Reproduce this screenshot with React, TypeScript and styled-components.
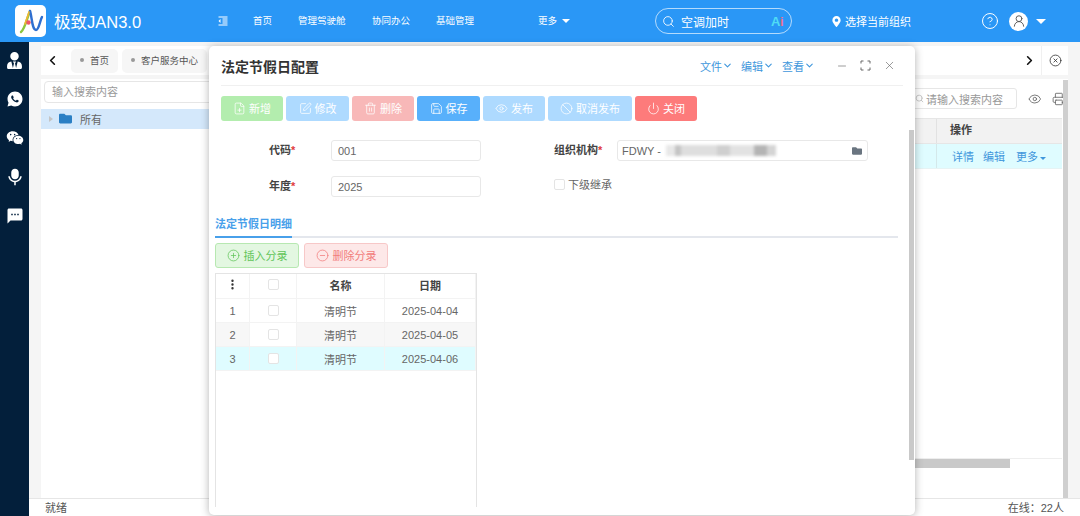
import React from "react";
import styled, { createGlobalStyle } from "styled-components";
import {
  Ban,
  ChevronDown,
  ChevronLeft,
  ChevronRight,
  CircleHelp,
  CircleMinus,
  CirclePlus,
  CircleX,
  Eye,
  EllipsisVertical,
  FilePlus,
  Minus,
  Power,
  Printer,
  Save,
  Search,
  SquarePen,
  Trash2,
  UserRound,
  X,
} from "lucide-react";
import { FaFolder, FaMapMarkerAlt, FaUserTie } from "react-icons/fa";
import { MdFormatIndentDecrease, MdSms } from "react-icons/md";
import { RiMicFill, RiWechatFill, RiWhatsappFill } from "react-icons/ri";

const FONT = `"Liberation Sans", "Noto Sans CJK SC", sans-serif`;

const GlobalStyle = createGlobalStyle`
  html, body {
    margin: 0;
    padding: 0;
    overflow: hidden;
    font-family: ${FONT};
    font-size: 11px;
    color: #555;
  }
  * {
    box-sizing: border-box;
  }
`;

const Page = styled.div`
  position: relative;
  width: 1080px;
  height: 516px;
  display: flex;
  flex-direction: column;
  background: #f5f5f5;
  overflow: hidden;
`;

/* top bar */
const Header = styled.header`
  height: 42px;
  flex: none;
  display: flex;
  align-items: center;
  background: #2a97f6;
  color: #fff;
  padding-left: 15px;
`;

const LogoBox = styled.div`
  width: 31px;
  height: 32px;
  border-radius: 5px;
  background: #fff;
  display: flex;
  align-items: center;
  justify-content: center;
  margin-right: 8px;
`;

const AppName = styled.div`
  font-size: 16.5px;
  width: 163px;
  white-space: nowrap;
`;

const NavIcon = styled.div`
  width: 36px;
  display: flex;
  margin-top: -1px;
`;

const NavItem = styled.div<{ $w: number }>`
  width: ${({ $w }) => $w}px;
  font-size: 9.5px;
  white-space: nowrap;
  margin-top: -2px;
`;

const Caret = styled.span<{ $size: number; $color: string; $gap: number }>`
  display: inline-block;
  margin-left: ${({ $gap }) => $gap}px;
  vertical-align: middle;
  border-left: ${({ $size }) => $size}px solid transparent;
  border-right: ${({ $size }) => $size}px solid transparent;
  border-top: ${({ $size }) => $size}px solid ${({ $color }) => $color};
`;

const SearchPill = styled.div`
  width: 137px;
  height: 26px;
  margin-left: 66px;
  border: 1px solid rgba(255, 255, 255, 0.65);
  border-radius: 13px;
  display: flex;
  align-items: center;
  padding: 0 8px 0 6px;
  gap: 6px;
  font-size: 12px;
`;

const AiMark = styled.span`
  margin-left: auto;
  font-weight: 700;
  font-size: 13px;
  color: #4fdcf5;
  letter-spacing: -0.5px;
  i {
    color: #e8708a;
    font-style: normal;
  }
`;

const OrgPicker = styled.div`
  margin-left: 39px;
  width: 150px;
  display: flex;
  align-items: center;
  gap: 3px;
  font-size: 11px;
`;

const Avatar = styled.div`
  width: 19px;
  height: 19px;
  margin-left: 10px;
  border-radius: 50%;
  background: #fff;
  display: flex;
  align-items: center;
  justify-content: center;
`;

const UserCaret = styled.div`
  margin-left: 3px;
  display: flex;
`;

/* body */
const Body = styled.div`
  flex: 1;
  min-height: 0;
  display: flex;
`;

const SideRail = styled.nav`
  width: 29px;
  flex: none;
  background: #031f3b;
  color: #fff;
  display: flex;
  flex-direction: column;
  align-items: center;
  padding-top: 8px;
  gap: 19px;
`;

const RailIcon = styled.div`
  height: 20px;
  display: flex;
  align-items: center;
`;

const Workspace = styled.div`
  flex: 1;
  min-width: 0;
  display: flex;
  flex-direction: column;
`;

const Content = styled.div`
  flex: 1;
  min-height: 0;
  display: flex;
  flex-direction: column;
  padding: 4px 12px 0;
`;

const TabStrip = styled.div`
  width: 1027px;
  height: 29px;
  flex: none;
  display: flex;
  align-items: center;
  background: #fff;
`;

const TabArrow = styled.div<{ $w: number; $after?: number }>`
  width: ${({ $w }) => $w}px;
  margin-right: ${({ $after }) => $after || 0}px;
  display: flex;
  justify-content: center;
  color: #111;
`;

const PageTab = styled.div`
  height: 24px;
  padding: 0 9px;
  margin-right: 4px;
  background: #f6f6f6;
  border-radius: 5px;
  display: flex;
  align-items: center;
  gap: 6px;
  padding-bottom: 1px;
  font-size: 9.5px;
  color: #555;
  white-space: nowrap;
  &::before {
    content: "";
    width: 4px;
    height: 4px;
    border-radius: 50%;
    background: #999;
  }
`;

const StripFill = styled.div`
  flex: 1;
`;

const StripClose = styled.div`
  width: 27px;
  height: 100%;
  border-left: 1px solid #f0f0f0;
  display: flex;
  align-items: center;
  justify-content: center;
  color: #333;
`;

const Panel = styled.div`
  position: relative;
  margin-top: 4px;
  width: 1027px;
  flex: 1;
  min-height: 0;
  background: #fff;
  display: flex;
`;

const TreeCol = styled.div`
  width: 867px;
  flex: none;
  padding-top: 2px;
`;

const TreeSearch = styled.div`
  height: 22px;
  margin-left: 3px;
  border: 1px solid #e6e6e6;
  border-radius: 4px;
  padding-left: 7px;
  line-height: 20px;
  font-size: 11px;
  color: #9a9a9a;
`;

const TreeRow = styled.div`
  height: 20px;
  margin-top: 6px;
  background: #d4e8fb;
  display: flex;
  align-items: center;
  padding: 0 0 1px 8px;
  font-size: 11px;
  color: #666;
`;

const TreeArrow = styled.span`
  border-top: 3px solid transparent;
  border-bottom: 3px solid transparent;
  border-left: 4px solid #c4c4c4;
  margin-right: 6px;
`;

const TreeLabel = styled.span`
  margin-left: 8px;
`;

const GridCol = styled.div`
  flex: 1;
  min-width: 0;
  display: flex;
  flex-direction: column;
`;

const GridTools = styled.div`
  height: 39px;
  flex: none;
  display: flex;
  align-items: center;
  justify-content: flex-end;
  color: #666;
  gap: 11px;
  padding-right: 2px;
`;

const GridSearch = styled.div`
  width: 111px;
  height: 21px;
  border: 1px solid #e6e6e6;
  border-radius: 3px;
  padding-left: 6px;
  display: flex;
  align-items: center;
  gap: 2px;
  font-size: 11px;
  color: #999;
  white-space: nowrap;
`;

const GridHead = styled.div`
  height: 26px;
  flex: none;
  width: 154px;
  background: #f2f2f2;
  border-top: 1px solid #e6e6e6;
  border-bottom: 1px solid #e6e6e6;
  display: flex;
`;

const OpHeadCell = styled.div`
  margin-left: 28px;
  padding-left: 13px;
  flex: 1;
  border-left: 1px solid #e2e2e2;
  line-height: 22px;
  font-weight: 700;
  color: #444;
`;

const GridRow = styled.div`
  height: 25px;
  flex: none;
  width: 154px;
  background: #dffcff;
  display: flex;
  border-bottom: 1px solid #e6f3f4;
`;

const OpCell = styled.div`
  margin-left: 28px;
  padding-left: 15px;
  flex: 1;
  border-left: 1px solid #d4e8ea;
  display: flex;
  align-items: center;
  gap: 9px;
  color: #3f97dc;
  white-space: nowrap;
`;

const OpMore = styled.span`
  margin-left: 2px;
`;

const GridBody = styled.div`
  flex: none;
  height: 290px;
  width: 154px;
  border-bottom: 1px solid #eee;
`;

const HScroll = styled.div`
  flex: none;
  width: 95px;
  height: 9px;
  margin-left: 7px;
  background: #c9c9c9;
`;

const VScroll = styled.div`
  position: absolute;
  right: 0;
  top: 1px;
  bottom: 0;
  width: 5px;
  background: #cfcfcf;
`;

const StatusBar = styled.footer`
  height: 18px;
  flex: none;
  background: #fff;
  border-top: 1px solid #e6e6e6;
  display: flex;
  align-items: center;
  justify-content: space-between;
  padding: 0 16px 1px 16px;
  font-size: 11px;
  color: #555;
`;

/* dialog */
const Dialog = styled.section`
  position: absolute;
  left: 209px;
  top: 46px;
  width: 706px;
  height: 469px;
  background: #fff;
  border-radius: 5px;
  box-shadow: 0 1px 8px rgba(0, 0, 0, 0.3);
  overflow: hidden;
`;

const DialogHead = styled.div`
  height: 40px;
  margin: 0 12px;
  padding-right: 7px;
  border-bottom: 1px solid #f0f0f0;
  display: flex;
  align-items: center;
`;

const DialogTitle = styled.h1`
  margin: 0;
  font-size: 14px;
  font-weight: 700;
  color: #333;
`;

const MenuLink = styled.div`
  display: flex;
  align-items: center;
  margin-left: 8px;
  font-size: 11px;
  color: #3f97dc;
  &:first-of-type {
    margin-left: auto;
  }
`;

const WinControls = styled.div`
  display: flex;
  align-items: center;
  gap: 12px;
  margin-left: 21px;
  color: #666;
`;

const ToolRow = styled.div`
  display: flex;
  gap: 3px;
  padding: 10px 12px 0;
`;

const ToolButton = styled.button<{ $bg: string; $w: number }>`
  width: ${({ $w }) => $w}px;
  height: 25px;
  border: none;
  border-radius: 3px;
  padding: 0 0 1px;
  background: ${({ $bg }) => $bg};
  color: #fff;
  font-family: ${FONT};
  font-size: 11px;
  display: flex;
  align-items: center;
  justify-content: center;
  gap: 3px;
`;

const FormGrid = styled.div`
  display: grid;
  grid-template-columns: 110px 150px 136px 251px;
  grid-auto-rows: 21px;
  row-gap: 15px;
  padding: 19px 0 0 12px;
`;

const FieldLabel = styled.label<{ $indent: number }>`
  padding-left: ${({ $indent }) => $indent}px;
  font-weight: 700;
  font-size: 11px;
  line-height: 21px;
  color: #444;
  em {
    color: #e03b3b;
    font-style: normal;
  }
`;

const TextField = styled.div<{ $pad: number }>`
  border: 1px solid #e8e8e8;
  border-radius: 3px;
  padding-left: ${({ $pad }) => $pad}px;
  display: flex;
  align-items: center;
  font-size: 11px;
  color: #666;
  white-space: pre;
`;

const Masked = styled.span`
  width: 110px;
  height: 11px;
  margin-left: 2px;
  background: linear-gradient(
    90deg,
    #e8e8e8 0 8%,
    #c4c4c4 8% 14%,
    #dedede 14% 46%,
    #cfcfcf 46% 58%,
    #e2e2e2 58% 80%,
    #b4b4b4 80% 92%,
    #d4d4d4 92% 100%
  );
  filter: blur(1.5px);
`;

const FolderTail = styled.span`
  margin-left: auto;
  margin-right: 5px;
  display: flex;
  color: #6a7580;
`;

const CheckField = styled.div`
  grid-column: 4 / 4;
  margin: -5px 0 0 -63px;
  display: flex;
  align-items: center;
  gap: 3px;
  color: #666;
  font-size: 11px;
`;

const CheckBox = styled.span`
  display: inline-block;
  width: 11px;
  height: 11px;
  background: #fff;
  border: 1px solid #e4e4e4;
  border-radius: 2px;
`;

const DetailTabs = styled.div`
  height: 26px;
  margin: 15px 17px 0 6px;
  border-bottom: 2px solid #e4e7ed;
  display: flex;
`;

const DetailTab = styled.div`
  height: 26px;
  padding: 3px 0 0;
  width: 77px;
  border-bottom: 2px solid #48a0ea;
  font-size: 11px;
  font-weight: 700;
  color: #48a0ea;
  white-space: nowrap;
`;

const EntryTools = styled.div`
  display: flex;
  gap: 5px;
  margin: 5px 0 0 6px;
`;

const EntryButton = styled.button<{ $bg: string; $line: string; $fg: string }>`
  width: 84px;
  height: 25px;
  padding: 0 0 1px;
  border: 1px solid ${({ $line }) => $line};
  border-radius: 3px;
  background: ${({ $bg }) => $bg};
  color: ${({ $fg }) => $fg};
  font-family: ${FONT};
  font-size: 11px;
  display: flex;
  align-items: center;
  justify-content: center;
  gap: 4px;
`;

const EntryTable = styled.div`
  width: 262px;
  height: 234px;
  margin: 5px 0 0 6px;
  border: 1px solid #e4e4e4;
  border-bottom: none;
`;

const TableRow = styled.div<{ $bg: string; $h: number }>`
  display: flex;
  height: ${({ $h }) => $h}px;
  width: 260px;
  background: ${({ $bg }) => $bg};
  border-bottom: 1px solid #f3f3f3;
`;

const TableCell = styled.div<{ $w: number; $head?: boolean; $bg?: string }>`
  width: ${({ $w }) => $w}px;
  flex: none;
  display: flex;
  align-items: center;
  justify-content: center;
  padding-bottom: ${({ $head }) => ($head ? 3 : 0)}px;
  border-right: 1px solid #f3f3f3;
  background: ${({ $bg }) => $bg || "transparent"};
  font-size: 11px;
  font-weight: ${({ $head }) => ($head ? 700 : 400)};
  color: ${({ $head }) => ($head ? "#444" : "#666")};
`;

const DialogScroll = styled.div`
  position: absolute;
  right: 1px;
  top: 84px;
  width: 5px;
  height: 330px;
  background: #c9c9c9;
`;

const COLS = [34, 47, 88, 91];

const RECORDS = [
  { no: 1, name: "清明节", date: "2025-04-04", bg: "#fff", box: "#fff" },
  { no: 2, name: "清明节", date: "2025-04-05", bg: "#f7f7f7", box: "#fff" },
  { no: 3, name: "清明节", date: "2025-04-06", bg: "#dffcff", box: "#dffcff" },
];

const TOOLS = [
  { label: "新增", icon: FilePlus, bg: "#b3edae", w: 62 },
  { label: "修改", icon: SquarePen, bg: "#aedaff", w: 63 },
  { label: "删除", icon: Trash2, bg: "#f8b8b8", w: 62 },
  { label: "保存", icon: Save, bg: "#58b0fb", w: 63 },
  { label: "发布", icon: Eye, bg: "#aedaff", w: 62 },
  { label: "取消发布", icon: Ban, bg: "#aedaff", w: 84 },
  { label: "关闭", icon: Power, bg: "#fd7b7b", w: 62 },
];

function Logo() {
  return (
    <svg width="26" height="26" viewBox="0 0 26 26" fill="none">
      <path d="M3 24C7 21 9 10 12 3" stroke="#8cc63f" strokeWidth="2.4" strokeLinecap="round" />
      <path d="M12 3C14 9 14 22 18 22C21 22 22 12 24 9" stroke="#2f6fd0" strokeWidth="2.4" strokeLinecap="round" />
      <path d="M11 4C10 8 8 12 7 16" stroke="#f2b632" strokeWidth="1.6" strokeLinecap="round" />
      <circle cx="10.5" cy="14.5" r="2.2" fill="#f0556a" />
    </svg>
  );
}

export default function App() {
  return (
    <Page>
      <GlobalStyle />
      <Header>
        <LogoBox>
          <Logo />
        </LogoBox>
        <AppName>极致JAN3.0</AppName>
        <NavIcon>
          <MdFormatIndentDecrease size={12} />
        </NavIcon>
        <NavItem $w={45}>首页</NavItem>
        <NavItem $w={74}>管理驾驶舱</NavItem>
        <NavItem $w={64}>协同办公</NavItem>
        <NavItem $w={102}>基础管理</NavItem>
        <NavItem $w={51}>
          更多
          <Caret $size={4} $color="#fff" $gap={5} />
        </NavItem>
        <SearchPill>
          <Search size={13} strokeWidth={1.6} />
          空调加时
          <AiMark>
            A<i>i</i>
          </AiMark>
        </SearchPill>
        <OrgPicker>
          <FaMapMarkerAlt size={11} />
          选择当前组织
        </OrgPicker>
        <CircleHelp size={18} strokeWidth={1.3} />
        <Avatar>
          <UserRound size={14} color="#555" strokeWidth={1.6} />
        </Avatar>
        <UserCaret>
          <Caret $size={5} $color="#fff" $gap={5} />
        </UserCaret>
      </Header>

      <Body>
        <SideRail>
          <RailIcon>
            <FaUserTie size={17} />
          </RailIcon>
          <RailIcon>
            <RiWhatsappFill size={18} />
          </RailIcon>
          <RailIcon>
            <RiWechatFill size={18} />
          </RailIcon>
          <RailIcon>
            <RiMicFill size={18} />
          </RailIcon>
          <RailIcon>
            <MdSms size={18} />
          </RailIcon>
        </SideRail>

        <Workspace>
          <Content>
            <TabStrip>
              <TabArrow $w={22} $after={8}>
                <ChevronLeft size={15} strokeWidth={2.6} />
              </TabArrow>
              <PageTab>首页</PageTab>
              <PageTab>客户服务中心</PageTab>
              <StripFill />
              <TabArrow $w={24}>
                <ChevronRight size={15} strokeWidth={2.6} />
              </TabArrow>
              <StripClose>
                <CircleX size={13} strokeWidth={1.5} />
              </StripClose>
            </TabStrip>
            <Panel>
              <TreeCol>
                <TreeSearch>输入搜索内容</TreeSearch>
                <TreeRow>
                  <TreeArrow />
                  <FaFolder size={13} color="#2a7fc4" />
                  <TreeLabel>所有</TreeLabel>
                </TreeRow>
              </TreeCol>
              <GridCol>
                <GridTools>
                  <GridSearch>
                    <Search size={9} color="#bbb" />
                    请输入搜索内容
                  </GridSearch>
                  <Eye size={14} strokeWidth={1.5} />
                  <Printer size={14} strokeWidth={1.5} />
                </GridTools>
                <GridHead>
                  <OpHeadCell>操作</OpHeadCell>
                </GridHead>
                <GridRow>
                  <OpCell>
                    <span>详情</span>
                    <span>编辑</span>
                    <OpMore>
                      更多
                      <Caret $size={3} $color="#3f97dc" $gap={2} />
                    </OpMore>
                  </OpCell>
                </GridRow>
                <GridBody />
                <HScroll />
              </GridCol>
              <VScroll />
            </Panel>
          </Content>
          <StatusBar>
            <span>就绪</span>
            <span>在线：22人</span>
          </StatusBar>
        </Workspace>
      </Body>

      <Dialog>
        <DialogHead>
          <DialogTitle>法定节假日配置</DialogTitle>
          <MenuLink>
            文件
            <ChevronDown size={11} strokeWidth={2.4} />
          </MenuLink>
          <MenuLink>
            编辑
            <ChevronDown size={11} strokeWidth={2.4} />
          </MenuLink>
          <MenuLink>
            查看
            <ChevronDown size={11} strokeWidth={2.4} />
          </MenuLink>
          <WinControls>
            <Minus size={12} strokeWidth={1.3} />
            <svg width="11" height="11" viewBox="0 0 11 11" fill="none" stroke="#666" strokeWidth="1">
              <path d="M1 3.5V1h2.5M7.5 1H10v2.5M10 7.5V10H7.5M3.5 10H1V7.5" />
            </svg>
            <X size={13} strokeWidth={1.2} />
          </WinControls>
        </DialogHead>

        <ToolRow>
          {TOOLS.map(({ label, icon: Icon, bg, w }) => (
            <ToolButton key={label} $bg={bg} $w={w}>
              <Icon size={13} strokeWidth={1.4} />
              {label}
            </ToolButton>
          ))}
        </ToolRow>

        <FormGrid>
          <FieldLabel $indent={48}>
            代码<em>*</em>
          </FieldLabel>
          <TextField $pad={6}>001</TextField>
          <FieldLabel $indent={73}>
            组织机构<em>*</em>
          </FieldLabel>
          <TextField $pad={4}>
            FDWY - <Masked />
            <FolderTail>
              <FaFolder size={10} />
            </FolderTail>
          </TextField>
          <FieldLabel $indent={48}>
            年度<em>*</em>
          </FieldLabel>
          <TextField $pad={6}>2025</TextField>
          <CheckField>
            <CheckBox />
            下级继承
          </CheckField>
        </FormGrid>

        <DetailTabs>
          <DetailTab>法定节假日明细</DetailTab>
        </DetailTabs>

        <EntryTools>
          <EntryButton $bg="#e3f7e1" $line="#b7e8b1" $fg="#62c55a">
            <CirclePlus size={13} strokeWidth={1.4} />
            插入分录
          </EntryButton>
          <EntryButton $bg="#fde8e8" $line="#f7c8c8" $fg="#f27c7c">
            <CircleMinus size={13} strokeWidth={1.4} />
            删除分录
          </EntryButton>
        </EntryTools>

        <EntryTable>
          <TableRow $bg="#fff" $h={25}>
            <TableCell $w={COLS[0]} $head>
              <EllipsisVertical size={13} strokeWidth={2.4} color="#333" />
            </TableCell>
            <TableCell $w={COLS[1]} $head>
              <CheckBox />
            </TableCell>
            <TableCell $w={COLS[2]} $head>
              名称
            </TableCell>
            <TableCell $w={COLS[3]} $head>
              日期
            </TableCell>
          </TableRow>
          {RECORDS.map((r) => (
            <TableRow key={r.no} $bg={r.bg} $h={24}>
              <TableCell $w={COLS[0]}>{r.no}</TableCell>
              <TableCell $w={COLS[1]} $bg={r.box}>
                <CheckBox />
              </TableCell>
              <TableCell $w={COLS[2]}>{r.name}</TableCell>
              <TableCell $w={COLS[3]}>{r.date}</TableCell>
            </TableRow>
          ))}
        </EntryTable>
        <DialogScroll />
      </Dialog>
    </Page>
  );
}
